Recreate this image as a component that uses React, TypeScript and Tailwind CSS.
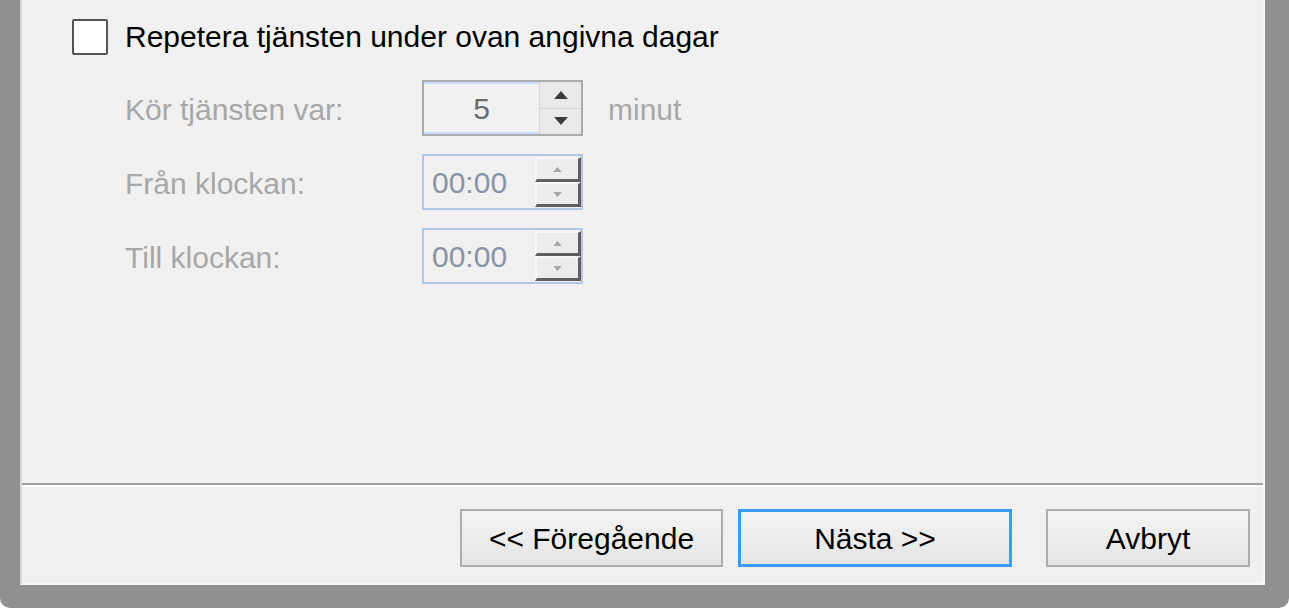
import type { ReactNode } from 'react';

const font = { fontFamily: '"Liberation Sans", Arial, sans-serif' };

function ArrowUp({ className }: { className: string }) {
  return (
    <svg viewBox="0 0 12 7" className={className}>
      <polygon points="0,7 6,0 12,7" fill="currentColor" />
    </svg>
  );
}

function ArrowDown({ className }: { className: string }) {
  return (
    <svg viewBox="0 0 12 7" className={className}>
      <polygon points="0,0 12,0 6,7" fill="currentColor" />
    </svg>
  );
}

function MinuteSpin() {
  return (
    <div className="flex h-[56px] w-[161px] border-2 border-[#ababab] bg-[#f0f0f0]">
      <div className="flex flex-1 items-center justify-center border-y-2 border-y-[#c9dcf3] text-[30px] text-[#6a6a6a]">
        5
      </div>
      <div className="flex w-[42px] flex-col border-l border-[#d6d6d6] bg-[#e9e9e9]">
        <div className="flex flex-1 items-center justify-center border-b border-[#d4d4d4] text-[#3c3c3c]">
          <ArrowUp className="h-[8px] w-[14px]" />
        </div>
        <div className="flex flex-1 items-center justify-center text-[#3c3c3c]">
          <ArrowDown className="h-[8px] w-[14px]" />
        </div>
      </div>
    </div>
  );
}

function TimeSpin() {
  return (
    <div className="flex h-[56px] w-[161px] border-2 border-[#b3c7e2] bg-[#f0f0f0]">
      <div className="flex flex-1 items-center pl-[8px] text-[30px] text-[#8a93a3]">00:00</div>
      <div className="flex w-[46px] flex-col py-[1px]">
        <div className="flex flex-1 items-center justify-center border-t-2 border-l-2 border-t-[#f8f8f8] border-l-[#f8f8f8] border-r-[3px] border-b-[3px] border-r-[#5e5e5e] border-b-[#5e5e5e] bg-[#ececec] text-[#a8a8a8]">
          <ArrowUp className="h-[5px] w-[9px]" />
        </div>
        <div className="flex flex-1 items-center justify-center border-t-2 border-l-2 border-t-[#f8f8f8] border-l-[#f8f8f8] border-r-[3px] border-b-[3px] border-r-[#5e5e5e] border-b-[#5e5e5e] bg-[#ececec] text-[#a8a8a8]">
          <ArrowDown className="h-[5px] w-[9px]" />
        </div>
      </div>
    </div>
  );
}

function Row({ label, children }: { label: string; children: ReactNode }) {
  return (
    <div className="flex items-center">
      <div className="w-[297px] pt-[2px] text-[30px] text-[#a7a7a7]">{label}</div>
      {children}
    </div>
  );
}

function Button({ label, width, primary }: { label: string; width: string; primary?: boolean }) {
  return (
    <button
      className={`flex h-[58px] items-center justify-center bg-gradient-to-b from-[#f3f3f3] to-[#e4e4e4] text-[30px] text-black ${width} ${
        primary ? 'border-[3px] border-[#3c9bf5]' : 'border-2 border-[#adadad]'
      }`}
    >
      {label}
    </button>
  );
}

export default function App() {
  return (
    <div className="h-[608px] w-[1289px] bg-white" style={font}>
      <div className="flex h-full flex-col rounded-b-[10px] bg-[#909090] pr-[24px] pb-[23px] pl-[20px]">
        <div className="flex flex-1 flex-col border-r-2 border-b-2 border-l-2 border-r-[#f7f7f7] border-b-[#f7f7f7] border-l-[#d8d8d8] bg-[#f0f0f0]">
          <div className="h-[483px] pt-[19px] pl-[50px]">
            <div className="flex h-[36px] items-center gap-[17px]">
              <div className="h-[36px] w-[36px] rounded-[2px] border-2 border-[#555] bg-white" />
              <span className="text-[30px] leading-[36px] text-black">Repetera tjänsten under ovan angivna dagar</span>
            </div>
            <div className="mt-[25px] flex flex-col gap-[18px] pl-[53px]">
              <Row label="Kör tjänsten var:">
                <MinuteSpin />
                <span className="ml-[25px] pt-[2px] text-[30px] text-[#a7a7a7]">minut</span>
              </Row>
              <Row label="Från klockan:">
                <TimeSpin />
              </Row>
              <Row label="Till klockan:">
                <TimeSpin />
              </Row>
            </div>
          </div>
          <div className="border-t-2 border-b-2 border-t-[#a0a0a0] border-b-white" />
          <div className="flex flex-1 items-start justify-end pt-[22px] pr-[13px]">
            <Button label="<< Föregående" width="w-[263px]" />
            <div className="w-[15px]" />
            <Button label="Nästa >>" width="w-[274px]" primary />
            <div className="w-[34px]" />
            <Button label="Avbryt" width="w-[204px]" />
          </div>
        </div>
      </div>
    </div>
  );
}
